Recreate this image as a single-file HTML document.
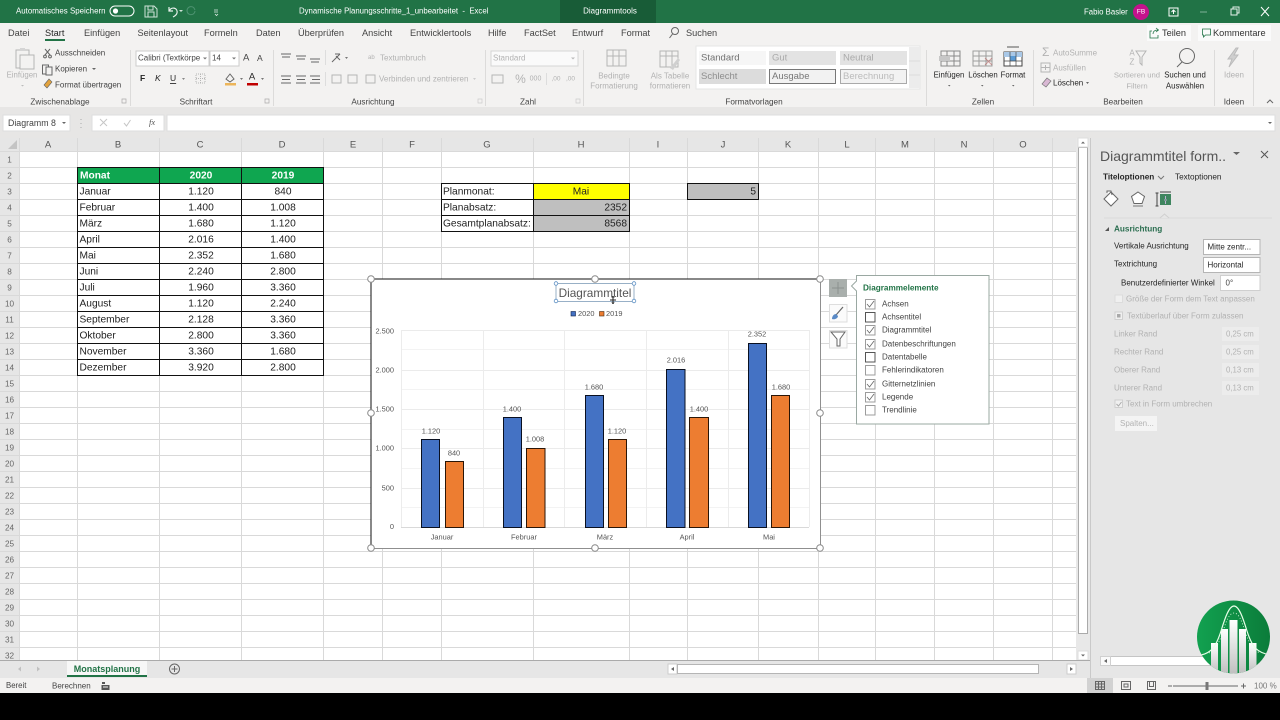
<!DOCTYPE html>
<html lang="de"><head><meta charset="utf-8"><title>Excel</title>
<style>
html,body{margin:0;padding:0;background:#000;width:1280px;height:720px;overflow:hidden}
svg{display:block;position:absolute;left:0;top:0;filter:blur(.25px)}
text{font-family:"Liberation Sans",sans-serif;dominant-baseline:central;white-space:pre;font-size:8.5px;fill:#444}
.m{text-anchor:middle}.e{text-anchor:end}.b{font-weight:bold}
.c{font-size:10.2px;fill:#222}.h{font-size:9.5px;fill:#555;text-anchor:middle}
.a{font-size:7.4px;fill:#555}.r{font-size:8.2px;fill:#666;text-anchor:middle}
.tab{font-size:9.2px;fill:#444}.g{font-size:8.2px;fill:#444;text-anchor:middle}
.p{font-size:8px;fill:#444}.pd{font-size:8px;fill:#b2b2b2}
.i{fill:none;stroke:#666;stroke-width:1}.id{fill:none;stroke:#b5b5b5;stroke-width:1}
.w{fill:#fff}.d{fill:#a8a8a8}.k{fill:#262626}
</style></head><body>
<svg width="1280" height="720" viewBox="0 0 1280 720" xmlns="http://www.w3.org/2000/svg">
<defs>
<clipPath id="cl"><circle cx="1233.500" cy="637" r="36.500"/></clipPath>
<linearGradient id="lg" x1="0" y1="0" x2="1" y2="0"><stop offset="0" stop-color="#12a150"/><stop offset="1" stop-color="#0b7c3a"/></linearGradient>
<linearGradient id="bg" x1="0" y1="0" x2="0" y2="1"><stop offset="0" stop-color="#fff"/><stop offset="1" stop-color="#bdbdbd"/></linearGradient>
</defs>
<rect width="1280" height="720" fill="#000"/>
<!-- title bar -->
<rect width="1280" height="23" fill="#217346"/>
<rect x="560" width="96" height="23" fill="#185c37"/>
<text x="16" y="11" class="w" style="font-size:7.900px">Automatisches Speichern</text>
<rect x="110" y="6" width="24" height="10" rx="5" fill="none" stroke="#fff"/><circle cx="115.500" cy="11" r="2.600" fill="#fff"/>
<path d="M145 6h9l3 3v8h-12zM148 6v4h5V6M148 17v-5h6v5" fill="none" stroke="#cfe3d8"/>
<path d="M169 7v4h4M169 11c3-5 9-3 8 2-.5 2-2 3-4 4" fill="none" stroke="#e8f1ec" stroke-width="1.200"/>
<path d="M179 10l2 2 2-2" fill="#cfe3d8"/>
<path d="M195 11a4 4 0 1 1-1-3l1 2" fill="none" stroke="#4d9270"/>
<path d="M214 10h4M214 12h4M215 14l1.500 1.500 1.500-1.500" stroke="#e0ece5" fill="none" stroke-width=".8"/>
<text x="299" y="11" class="w" style="font-size:7.800px">Dynamische Planungsschritte_1_unbearbeitet  -  Excel</text>
<text x="610" y="11" class="w m" style="font-size:8px">Diagrammtools</text>
<text x="1084" y="12" class="w" style="font-size:7.800px">Fabio Basler</text>
<circle cx="1141" cy="12" r="8" fill="#c4128c"/><text x="1141" y="12" class="w m" style="font-size:6.500px">FB</text>
<path d="M1169 8h9v8h-9zM1173.500 14v-4M1171.500 12l2-2 2 2" fill="none" stroke="#fff"/>
<path d="M1200 12h7" stroke="#7fb098"/>
<path d="M1231 9h6v6h-6zM1233 9V7h6v6h-2" fill="none" stroke="#e8f1ec"/>
<path d="M1261 7l8 9M1269 7l-8 9" stroke="#fff"/>
<!-- ribbon -->
<rect y="23" width="1280" height="85" fill="#f3f2f1"/>
<text x="8" y="33" class="tab">Datei</text><text x="45" y="33" class="tab k">Start</text>
<rect x="45" y="39" width="20" height="2" fill="#217346"/>
<text x="84" y="33" class="tab">Einfügen</text><text x="137.500" y="33" class="tab">Seitenlayout</text>
<text x="204" y="33" class="tab">Formeln</text><text x="256" y="33" class="tab">Daten</text>
<text x="298" y="33" class="tab">Überprüfen</text><text x="362" y="33" class="tab">Ansicht</text>
<text x="410" y="33" class="tab">Entwicklertools</text><text x="488" y="33" class="tab">Hilfe</text>
<text x="524" y="33" class="tab">FactSet</text><text x="572" y="33" class="tab">Entwurf</text>
<text x="621" y="33" class="tab">Format</text><text x="686" y="33" class="tab">Suchen</text>
<circle cx="675" cy="31" r="3.500" class="i"/><path d="M672.500 34l-3 4" class="i"/>
<rect x="1147" y="25" width="44" height="16" fill="#fafafa"/><rect x="1198" y="25" width="73" height="16" fill="#fafafa"/>
<path d="M1152 31h-2v7h8v-3M1153 34c0-3 2-4 5-4M1156 28l2.500 2-2.500 2" fill="none" stroke="#217346" stroke-width=".8"/>
<text x="1162" y="33" class="tab" style="fill:#333">Teilen</text>
<path d="M1202.500 29h8v6h-5l-2 2v-2h-1z" fill="none" stroke="#217346" stroke-width=".8"/>
<text x="1213" y="33" class="tab" style="fill:#333">Kommentare</text>
<!-- separators -->
<path d="M130.500 50v56M273.500 50v56M485.500 50v56M583.500 50v56M926.500 50v56M1033.500 50v56M1214.500 50v56M1253.500 50v56" stroke="#dcdbda"/>
<!-- clipboard -->
<path d="M16 50h13v18H16z" class="id"/><path d="M20 55h14v14H20z" fill="#f3f2f1" stroke="#b5b5b5"/><rect x="20" y="48" width="5" height="3" fill="#d5d5d5"/>
<text x="22" y="75" class="m pd" style="font-size:7.800px">Einfügen</text><path d="M21 85h3l-1.500 1.500z" fill="#bbb"/>
<path d="M45 49l5 6M50 49l-5 6" class="i"/><circle cx="45" cy="56.500" r="1.400" class="i"/><circle cx="50" cy="56.500" r="1.400" class="i"/>
<text x="55" y="53" class="p">Ausschneiden</text>
<path d="M42.500 65h6v9h-6z" class="i"/><path d="M46 67h6v8h-6z" fill="#f3f2f1" stroke="#666"/>
<text x="55" y="69" class="p">Kopieren</text><path d="M92 68h4l-2 2z" fill="#666"/>
<path d="M44 85l5-6 3 3-5 6z" fill="#e2a23d" stroke="#666" stroke-width=".6"/>
<text x="55" y="85" class="p">Format übertragen</text>
<text x="60" y="102" class="g">Zwischenablage</text><path d="M122 99h4v4h-4z" fill="none" stroke="#aaa" stroke-width=".7"/>
<!-- font -->
<rect x="136" y="51" width="73" height="15" fill="#fff" stroke="#ccc"/><rect x="210" y="51" width="29" height="15" fill="#fff" stroke="#ccc"/>
<text x="138" y="58" class="p">Calibri (Textkörpe</text><path d="M203 57.500h4l-2 2z" fill="#777"/>
<text x="212" y="58" class="p">14</text><path d="M232 57.500h4l-2 2z" fill="#777"/>
<text x="243" y="58" class="p" style="font-size:9.500px">A</text><text x="257" y="58" class="p" style="font-size:8.500px">A</text>
<text x="140" y="78" class="b k" style="font-size:8.500px">F</text><text x="155" y="78" class="k" style="font-size:8.500px;font-style:italic">K</text><text x="170" y="78" class="k" style="font-size:8.500px;text-decoration:underline">U</text>
<path d="M182 78h3l-1.500 2z" fill="#888"/><path d="M196 74h9v9h-9zM196 78.500h9M200.500 74v9" class="id" stroke-dasharray="1 1"/>
<path d="M226 79l4-5 4 5-4 3z" class="i"/><rect x="225" y="83" width="11" height="2.500" fill="#ecb55a"/>
<text x="252" y="77" class="m k" style="font-size:9.500px">A</text><rect x="247" y="83" width="11" height="2.500" fill="#c00000"/>
<path d="M240 78h3l-1.500 2zM261 78h3l-1.500 2z" fill="#777"/>
<text x="196" y="102" class="g">Schriftart</text><path d="M265 99h4v4h-4z" fill="none" stroke="#aaa" stroke-width=".7"/>
<!-- align -->
<path d="M281 54h10M282 57h8M296 56h10M297 59h8M310 59h10M311 62h8" class="i"/>
<path d="M281 76h10M282 79.500h8M281 83h10M296 76h10M297 79.500h8M296 83h10M310 76h10M312 79.500h8M310 83h10" class="i"/>
<path d="M325.500 50v15M325.500 72v14" stroke="#ddd"/>
<path d="M332 62l8-8M335 54h5M340 60l-4-4" class="i"/><path d="M345 57h3l-1.500 2z" fill="#777"/>
<path d="M332 75h9v8h-9zM348 75h9v8h-9z" class="id"/>
<text x="380" y="58" class="pd">Textumbruch</text><text x="368" y="58" class="pd" style="font-size:6px">ab</text>
<rect x="366" y="75" width="9" height="8" class="id"/>
<text x="379" y="79" class="pd">Verbinden und zentrieren</text><path d="M473 78h3l-1.500 2z" fill="#ccc"/>
<text x="373" y="102" class="g">Ausrichtung</text><path d="M478 99h4v4h-4z" fill="none" stroke="#ccc" stroke-width=".7"/>
<!-- number -->
<rect x="491" y="51" width="87" height="15" fill="#fafafa" stroke="#d5d5d5"/><text x="493" y="58" class="pd">Standard</text><path d="M571 57.500h4l-2 2z" fill="#bbb"/>
<path d="M492 75h11v8h-11z" class="id"/><text x="520.500" y="79" class="pd m" style="font-size:12px">%</text><text x="535.500" y="79" class="pd m" style="font-size:7px">000</text>
<path d="M546.500 73v12" stroke="#ddd"/><text x="556" y="79" class="pd m" style="font-size:6.500px">,00</text><text x="570.500" y="79" class="pd m" style="font-size:6.500px">,00</text>
<text x="528" y="102" class="g">Zahl</text><path d="M576 99h4v4h-4z" fill="none" stroke="#ccc" stroke-width=".7"/>
<!-- styles -->
<path d="M607 50h19v16h-19zM607 56h19M613 50v16M619 50v16" class="id"/>
<text x="614" y="76" class="pd m">Bedingte</text><text x="614" y="86" class="pd m">Formatierung</text>
<path d="M660 51h18v16h-18zM660 56h18M666 51v16M672 51v16" class="id"/><path d="M670 68l8-10 2 2-7 10z" fill="#d0d0d0"/>
<text x="670" y="76" class="pd m">Als Tabelle</text><text x="670" y="86" class="pd m">formatieren</text>
<rect x="696" y="46" width="224" height="43" fill="#fff" stroke="#e5e5e5"/>
<rect x="699" y="51" width="67" height="14" fill="#f6f6f6"/><text x="701" y="58" style="font-size:9.500px;fill:#707070">Standard</text>
<rect x="769" y="51" width="67" height="14" fill="#e3e3e3"/><text x="772" y="58" style="font-size:9.500px;fill:#aaa">Gut</text>
<rect x="840" y="51" width="67" height="14" fill="#e3e3e3"/><text x="843" y="58" style="font-size:9.500px;fill:#aaa">Neutral</text>
<rect x="699" y="69" width="67" height="15" fill="#dcdcdc"/><text x="701" y="76.500" style="font-size:9.500px;fill:#8e8e8e">Schlecht</text>
<rect x="769.500" y="69.500" width="66" height="14" fill="#f2f2f2" stroke="#777"/><text x="772" y="76.500" style="font-size:9.500px;fill:#777">Ausgabe</text>
<rect x="840.500" y="69.500" width="66" height="14" fill="#f2f2f2" stroke="#aaa"/><text x="843" y="76.500" style="font-size:9.500px;fill:#bbb">Berechnung</text>
<rect x="909" y="47" width="11" height="41" fill="#ececec"/><path d="M909 61h11M909 75h11" stroke="#ddd"/>
<text x="754" y="102" class="g">Formatvorlagen</text>
<!-- cells -->
<path d="M941 51h19v15h-19zM941 56h19M941 61h19M947 51v15M954 51v15" class="i" stroke-opacity=".75"/><rect x="939" y="56" width="11" height="5" fill="#c7c7c7"/>
<text x="949" y="75" class="p m k" style="font-size:7.800px">Einfügen</text><path d="M948 85h2.500l-1.250 1.500z" fill="#666"/>
<path d="M973 51h19v15h-19zM973 56h19M973 61h19M979 51v15M986 51v15" class="i" stroke-opacity=".6"/><path d="M985 58l7 7M992 58l-7 7" stroke="#b04b4b" stroke-opacity=".5"/>
<text x="983" y="75" class="p m k" style="font-size:7.800px">Löschen</text><path d="M981 85h2.500l-1.250 1.500z" fill="#666"/>
<rect x="1004" y="52" width="18" height="14" fill="#fff" stroke="#444"/><rect x="1004" y="52" width="18" height="5" fill="#a9c8e7"/><rect x="1010" y="56" width="6" height="5" fill="#5b9bd5"/><path d="M1004 61h18M1010 52v14M1016 52v14" stroke="#444" stroke-width=".7"/><path d="M1007 47h12" stroke="#555"/>
<text x="1013" y="75" class="p m k" style="font-size:7.800px">Format</text><path d="M1012 85h2.500l-1.250 1.500z" fill="#666"/>
<text x="983" y="102" class="g">Zellen</text>
<!-- edit -->
<text x="1042" y="52" class="pd" style="font-size:12px">Σ</text><text x="1053" y="53" class="pd">AutoSumme</text>
<path d="M1041 63h9v9h-9zM1041 67.500h9M1045.500 65v5" class="id"/>
<text x="1053" y="68" class="pd">Ausfüllen</text>
<path d="M1042 84l5-6 4 3-5 6z" fill="#d9b8d4" stroke="#777" stroke-width=".7"/>
<text x="1053" y="83" class="p k">Löschen</text><path d="M1086 82h3l-1.500 2z" fill="#666"/>
<text x="1132" y="53" class="pd m" style="font-size:8px">A</text><text x="1132" y="62" class="pd m" style="font-size:8px">Z</text><path d="M1136 51h10l-4 6v8l-2-2v-6z" class="id"/>
<text x="1137" y="75" class="pd m" style="font-size:7.700px">Sortieren und</text><text x="1137" y="86" class="pd m" style="font-size:7.700px">Filtern</text>
<circle cx="1187" cy="56" r="7.500" class="i"/><path d="M1182 62l-5 5" class="i"/>
<text x="1185" y="75" class="p m k" style="font-size:7.800px">Suchen und</text><text x="1185" y="86" class="p m k" style="font-size:7.800px">Auswählen</text>
<path d="M1236 48l-8 11h4l-3 8 9-12h-4l4-7z" fill="#cfcfcf" stroke="#bbb"/>
<text x="1234" y="75" class="pd m">Ideen</text>
<text x="1123" y="102" class="g">Bearbeiten</text><text x="1234" y="102" class="g">Ideen</text>
<path d="M1267 103l3-3 3 3" fill="none" stroke="#666"/>
<!-- formula bar -->
<rect y="107" width="1280" height="31" fill="#e7e6e5"/>
<rect x="3" y="115" width="67" height="16" fill="#fff" stroke="#dedede"/><text x="8" y="123" class="p" style="font-size:8.800px">Diagramm 8</text><path d="M62 122h4l-2 2z" fill="#666"/>
<path d="M81 119v1M81 123v1M81 127v1" stroke="#aaa"/>
<rect x="92" y="115" width="72" height="16" fill="#fff" stroke="#dedede"/><path d="M100 119l7 7M107 119l-7 7" stroke="#c6c6c6"/><path d="M124 123l2.500 3 4-6" fill="none" stroke="#c6c6c6"/>
<text x="149" y="122" style="font-size:8.500px;font-style:italic;font-family:'Liberation Serif',serif;fill:#555">fx</text>
<rect x="167" y="115" width="1108" height="16" fill="#fff" stroke="#dedede"/><path d="M1268 122h4l-2 2z" fill="#666"/>
<!-- sheet -->
<rect x="0" y="138" width="1090" height="522" fill="#fff"/>
<rect x="0" y="138" width="1076" height="13" fill="#e6e6e6"/><rect x="0" y="138" width="19" height="522" fill="#e6e6e6"/>
<path d="M8 149l9-9v9z" fill="#c4c4c4"/>
<path d="M19.500 138V660M77.500 138V660M159.500 138V660M241.500 138V660M323.500 138V660M382.500 138V660M441.500 138V660M533.500 138V660M629.500 138V660M687.500 138V660M758.500 138V660M818.500 138V660M875.500 138V660M934.500 138V660M993.500 138V660M1052.500 138V660" stroke="#d9d9d9"/>
<path d="M0 151.500H1076M0 167.500H1076M0 183.500H1076M0 199.500H1076M0 215.500H1076M0 231.500H1076M0 247.500H1076M0 263.500H1076M0 279.500H1076M0 295.500H1076M0 311.500H1076M0 327.500H1076M0 343.500H1076M0 359.500H1076M0 375.500H1076M0 391.500H1076M0 407.500H1076M0 423.500H1076M0 439.500H1076M0 455.500H1076M0 471.500H1076M0 487.500H1076M0 503.500H1076M0 519.500H1076M0 535.500H1076M0 551.500H1076M0 567.500H1076M0 583.500H1076M0 599.500H1076M0 615.500H1076M0 631.500H1076M0 647.500H1076" stroke="#d9d9d9"/>
<text x="48" y="145" class="h">A</text><text x="118" y="145" class="h">B</text><text x="200" y="145" class="h">C</text><text x="282" y="145" class="h">D</text><text x="353" y="145" class="h">E</text><text x="412" y="145" class="h">F</text><text x="487" y="145" class="h">G</text><text x="581" y="145" class="h">H</text><text x="658" y="145" class="h">I</text><text x="723" y="145" class="h">J</text><text x="788" y="145" class="h">K</text><text x="847" y="145" class="h">L</text><text x="905" y="145" class="h">M</text><text x="964" y="145" class="h">N</text><text x="1023" y="145" class="h">O</text>
<g>
<text x="9.500" y="160" class="r">1</text><text x="9.500" y="176" class="r">2</text><text x="9.500" y="192" class="r">3</text><text x="9.500" y="208" class="r">4</text><text x="9.500" y="224" class="r">5</text><text x="9.500" y="240" class="r">6</text><text x="9.500" y="256" class="r">7</text><text x="9.500" y="272" class="r">8</text><text x="9.500" y="288" class="r">9</text><text x="9.500" y="304" class="r">10</text><text x="9.500" y="320" class="r">11</text><text x="9.500" y="336" class="r">12</text><text x="9.500" y="352" class="r">13</text><text x="9.500" y="368" class="r">14</text><text x="9.500" y="384" class="r">15</text><text x="9.500" y="400" class="r">16</text><text x="9.500" y="416" class="r">17</text><text x="9.500" y="432" class="r">18</text><text x="9.500" y="448" class="r">19</text><text x="9.500" y="464" class="r">20</text><text x="9.500" y="480" class="r">21</text><text x="9.500" y="496" class="r">22</text><text x="9.500" y="512" class="r">23</text><text x="9.500" y="528" class="r">24</text><text x="9.500" y="544" class="r">25</text><text x="9.500" y="560" class="r">26</text><text x="9.500" y="576" class="r">27</text><text x="9.500" y="592" class="r">28</text><text x="9.500" y="608" class="r">29</text><text x="9.500" y="624" class="r">30</text><text x="9.500" y="640" class="r">31</text><text x="9.500" y="656" class="r">32</text>
</g>
<!-- table -->
<rect x="78" y="168" width="245" height="16" fill="#0fa650"/>
<path d="M77.500 167.500H323.500V375.500H77.500ZM77.500 183.500H323.500M77.500 199.500H323.500M77.500 215.500H323.500M77.500 231.500H323.500M77.500 247.500H323.500M77.500 263.500H323.500M77.500 279.500H323.500M77.500 295.500H323.500M77.500 311.500H323.500M77.500 327.500H323.500M77.500 343.500H323.500M77.500 359.500H323.500M159.500 167.500V375.500M241.500 167.500V375.500" fill="none" stroke="#111"/>
<text x="80" y="176" class="c b w">Monat</text><text x="201" y="176" class="c b w m">2020</text><text x="283" y="176" class="c b w m">2019</text>
<text x="79.500" y="192" class="c">Januar</text><text x="201" y="192" class="c m">1.120</text><text x="283" y="192" class="c m">840</text>
<text x="79.500" y="208" class="c">Februar</text><text x="201" y="208" class="c m">1.400</text><text x="283" y="208" class="c m">1.008</text>
<text x="79.500" y="224" class="c">März</text><text x="201" y="224" class="c m">1.680</text><text x="283" y="224" class="c m">1.120</text>
<text x="79.500" y="240" class="c">April</text><text x="201" y="240" class="c m">2.016</text><text x="283" y="240" class="c m">1.400</text>
<text x="79.500" y="256" class="c">Mai</text><text x="201" y="256" class="c m">2.352</text><text x="283" y="256" class="c m">1.680</text>
<text x="79.500" y="272" class="c">Juni</text><text x="201" y="272" class="c m">2.240</text><text x="283" y="272" class="c m">2.800</text>
<text x="79.500" y="288" class="c">Juli</text><text x="201" y="288" class="c m">1.960</text><text x="283" y="288" class="c m">3.360</text>
<text x="79.500" y="304" class="c">August</text><text x="201" y="304" class="c m">1.120</text><text x="283" y="304" class="c m">2.240</text>
<text x="79.500" y="320" class="c">September</text><text x="201" y="320" class="c m">2.128</text><text x="283" y="320" class="c m">3.360</text>
<text x="79.500" y="336" class="c">Oktober</text><text x="201" y="336" class="c m">2.800</text><text x="283" y="336" class="c m">3.360</text>
<text x="79.500" y="352" class="c">November</text><text x="201" y="352" class="c m">3.360</text><text x="283" y="352" class="c m">1.680</text>
<text x="79.500" y="368" class="c">Dezember</text><text x="201" y="368" class="c m">3.920</text><text x="283" y="368" class="c m">2.800</text>
<!-- plan -->
<rect x="533" y="183" width="96" height="16" fill="#ffff00"/><rect x="533" y="199" width="96" height="32" fill="#bfbfbf"/><rect x="687" y="183" width="71" height="16" fill="#bfbfbf"/>
<path d="M441.500 183.500H629.500V231.500H441.500ZM441.500 199.500H629.500M441.500 215.500H629.500M533.500 183.500V231.500M687.500 183.500H758.500V199.500H687.500Z" fill="none" stroke="#111"/>
<text x="443" y="192" class="c">Planmonat:</text><text x="443" y="208" class="c">Planabsatz:</text><text x="443" y="224" class="c">Gesamtplanabsatz:</text>
<text x="581" y="192" class="c m">Mai</text><text x="627" y="208" class="c e">2352</text><text x="627" y="224" class="c e">8568</text><text x="756" y="192" class="c e">5</text>
<!-- chart -->
<rect x="371" y="279" width="449" height="269" fill="#fff"/>
<path d="M401 349.500H809M401 389.500H809M401 429.500H809M401 468.500H809M401 507.500H809" stroke="#f3f3f3"/>
<path d="M401 330.500H809M401 370.500H809M401 409.500H809M401 448.500H809M401 488.500H809" stroke="#ebebeb"/>
<path d="M401.500 330V527M483.500 330V527M564.500 330V527M646.500 330V527M728.500 330V527M809.500 330V527" stroke="#ececec"/>
<path d="M401 527.500H809" stroke="#d9d9d9"/>
<g stroke="#0a1020" stroke-width="1">
<rect x="421.500" y="439.500" width="18" height="88" fill="#4472c4"/><rect x="503.500" y="417.500" width="18" height="110" fill="#4472c4"/><rect x="585.500" y="395.500" width="18" height="132" fill="#4472c4"/><rect x="666.500" y="369.500" width="18.500" height="158" fill="#4472c4"/><rect x="748.500" y="343.500" width="18" height="184" fill="#4472c4"/>
</g>
<g stroke="#2b1607" stroke-width="1">
<rect x="445.500" y="461.500" width="18" height="66" fill="#ed7d31"/><rect x="526.500" y="448.500" width="18.500" height="79" fill="#ed7d31"/><rect x="608.500" y="439.500" width="18" height="88" fill="#ed7d31"/><rect x="689.500" y="417.500" width="19" height="110" fill="#ed7d31"/><rect x="771.500" y="395.500" width="18" height="132" fill="#ed7d31"/>
</g>
<g>
<text x="431" y="431" class="a m">1.120</text><text x="454" y="453" class="a m">840</text><text x="512" y="409" class="a m">1.400</text><text x="535" y="439" class="a m">1.008</text><text x="594" y="387" class="a m">1.680</text><text x="617" y="431" class="a m">1.120</text><text x="676" y="360" class="a m">2.016</text><text x="699" y="409" class="a m">1.400</text><text x="757" y="334" class="a m">2.352</text><text x="781" y="387" class="a m">1.680</text>
<text x="394" y="331" class="a e">2.500</text><text x="394" y="370" class="a e">2.000</text><text x="394" y="409" class="a e">1.500</text><text x="394" y="448" class="a e">1.000</text><text x="394" y="488" class="a e">500</text><text x="394" y="526.500" class="a e">0</text>
<text x="442" y="537" class="a m">Januar</text><text x="524" y="537" class="a m">Februar</text><text x="605" y="537" class="a m">März</text><text x="687" y="537" class="a m">April</text><text x="769" y="537" class="a m">Mai</text>
</g>
<rect x="571" y="311.500" width="4.500" height="4.500" fill="#4472c4" stroke="#10204a" stroke-width=".6"/><text x="578" y="313.500" class="a">2020</text>
<rect x="599.500" y="311.500" width="4.500" height="4.500" fill="#ed7d31" stroke="#4a2a10" stroke-width=".6"/><text x="606" y="313.500" class="a">2019</text>
<path d="M371 279H820" stroke="#111" stroke-width="1"/><path d="M371 279V548" stroke="#111" stroke-width="1"/>
<path d="M820.500 279V548M371 548.500H820" stroke="#8f8f8f"/>
<g fill="#fff" stroke="#8a8a8a" stroke-width="1">
<circle cx="371" cy="279" r="3.300"/><circle cx="595" cy="279" r="3.300"/><circle cx="820" cy="279" r="3.300"/><circle cx="371" cy="413" r="3.300"/><circle cx="820" cy="413" r="3.300"/><circle cx="371" cy="548" r="3.300"/><circle cx="595" cy="548" r="3.300"/><circle cx="820" cy="548" r="3.300"/>
</g>
<rect x="556" y="283.500" width="78" height="18" fill="none" stroke="#7f9db9" stroke-width=".8"/>
<g fill="#fff" stroke="#5b8fc4" stroke-width=".8"><circle cx="556" cy="283.500" r="1.800"/><circle cx="634" cy="283.500" r="1.800"/><circle cx="556" cy="301" r="1.800"/><circle cx="634" cy="301" r="1.800"/></g>
<text x="595" y="293" class="m" style="font-size:11.800px;fill:#555">Diagrammtitel</text>
<path d="M613 297v6M610 300h6" stroke="#222" stroke-width="1"/><path d="M611.500 297.500l1.500-1.500 1.500 1.500M611.500 302.500l1.500 1.500 1.500-1.500" fill="#222" stroke="#222" stroke-width=".5"/>
<!-- chart buttons -->
<rect x="829" y="279" width="18" height="18" fill="#a9afac"/><path d="M838 282v12M832 288h12" stroke="#8a918e"/>
<rect x="829.500" y="304.500" width="17.500" height="17.500" fill="#fbfbfb" stroke="#dedede"/><path d="M843 307l-7 8" stroke="#666" stroke-width="1.200"/><path d="M832 319c0-3 2-5 4-5l2 2c0 2-3 4-6 3z" fill="#5a8ac6"/>
<rect x="829.500" y="330.500" width="17.500" height="17.500" fill="#fbfbfb" stroke="#dedede"/><path d="M831 332h14l-5 7v7h-3v-7z" fill="#fff" stroke="#666"/>
<!-- popup -->
<rect x="856.500" y="275.500" width="132.500" height="148.500" fill="#fff" stroke="#9aa8a2"/>
<path d="M856.500 281l-5 5 5 5" fill="#fff" stroke="#9aa8a2"/><path d="M857 281.500v9" stroke="#fff"/>
<text x="863" y="288" class="b" style="font-size:8.200px;fill:#217346">Diagrammelemente</text>
<g fill="none" stroke="#9c9c9c"><rect x="865.500" y="299.500" width="9.500" height="9.500"/><rect x="865.500" y="312.500" width="9.500" height="9.500" stroke="#555"/><rect x="865.500" y="325.500" width="9.500" height="9.500"/><rect x="865.500" y="339.500" width="9.500" height="9.500"/><rect x="865.500" y="352.500" width="9.500" height="9.500" stroke="#555"/><rect x="865.500" y="365.500" width="9.500" height="9.500"/><rect x="865.500" y="379.500" width="9.500" height="9.500"/><rect x="865.500" y="392.500" width="9.500" height="9.500"/><rect x="865.500" y="405.500" width="9.500" height="9.500"/></g>
<path d="M867 304l2.500 3 4.500-6M867 330l2.500 3 4.500-6M867 344l2.500 3 4.500-6M867 384l2.500 3 4.500-6M867 397l2.500 3 4.500-6" fill="none" stroke="#666" stroke-width=".8"/>
<g><text x="882" y="304" class="p">Achsen</text><text x="882" y="317" class="p">Achsentitel</text><text x="882" y="330" class="p">Diagrammtitel</text><text x="882" y="344" class="p">Datenbeschriftungen</text><text x="882" y="357" class="p">Datentabelle</text><text x="882" y="370" class="p">Fehlerindikatoren</text><text x="882" y="384" class="p">Gitternetzlinien</text><text x="882" y="397" class="p">Legende</text><text x="882" y="410" class="p">Trendlinie</text></g>
<!-- sheet scrollbar -->
<rect x="1076" y="138" width="14" height="522" fill="#e8e8e8"/>
<rect x="1078.500" y="147.500" width="9" height="486" fill="#fff" stroke="#aaa"/>
<rect x="1078" y="138" width="10" height="9" fill="#fff" stroke="#ddd"/><path d="M1081 143.500l2-2 2 2z" fill="#666"/>
<rect x="1078" y="651" width="10" height="9" fill="#fff" stroke="#ddd"/><path d="M1081 654.500l2 2 2-2z" fill="#666"/>
<!-- panel -->
<rect x="1090" y="138" width="190" height="540" fill="#e6e6e6"/><path d="M1090.500 138V678" stroke="#c9c9c9"/>
<text x="1100" y="156" style="font-size:14px;fill:#555">Diagrammtitel form..</text><path d="M1233 152h7l-3.500 3z" fill="#666"/>
<path d="M1261 151l7 7M1268 151l-7 7" stroke="#555"/>
<text x="1103" y="177" class="b k" style="font-size:8.200px">Titeloptionen</text><path d="M1158 176l3 3 3-3" fill="none" stroke="#777"/><text x="1175" y="177" class="k" style="font-size:8.200px">Textoptionen</text>
<path d="M1104 199l7-7 7 7-7 7zM1107 193v-2h4l1 4" fill="#fff" stroke="#666"/>
<path d="M1138 192l6.500 4.500-2.500 7h-8l-2.500-7z" fill="#fff" stroke="#666"/><path d="M1133 206h10" stroke="#777"/>
<rect x="1160" y="194" width="11" height="11" fill="#217346" opacity=".85"/><path d="M1157 193v13M1155.500 193h3M1155.500 206h3M1160 192h11" stroke="#444" fill="none"/><path d="M1165.500 196v3M1165.500 201v3M1164 200h3" stroke="#dbe" stroke-width=".8"/>
<path d="M1104 218H1272" stroke="#d9d9d9"/><path d="M1160 218l4.500-4 4.500 4" fill="#e6e6e6" stroke="#d0d0d0"/>
<path d="M1105 231h4v-4z" fill="#555"/><text x="1114" y="229" class="b" style="font-size:8.200px;fill:#2b6e50">Ausrichtung</text>
<g>
<text x="1114" y="246" class="p k">Vertikale Ausrichtung</text><rect x="1203.500" y="239.500" width="56.500" height="15" fill="#fff" stroke="#b5b5b5"/><text x="1207.500" y="247" class="p k">Mitte zentr...</text>
<text x="1114" y="264" class="p k">Textrichtung</text><rect x="1203.500" y="257.500" width="56.500" height="15" fill="#fff" stroke="#b5b5b5"/><text x="1207.500" y="265" class="p k">Horizontal</text>
<text x="1121" y="283" class="p k">Benutzerdefinierter Winkel</text><rect x="1220.500" y="275.500" width="39.500" height="15" fill="#fff" stroke="#cfcfcf"/><text x="1225.500" y="283" class="p">0°</text>
<rect x="1115" y="295" width="7.500" height="7.500" fill="#f0f0f0" stroke="#dcdcdc"/><text x="1126" y="299" class="pd">Größe der Form dem Text anpassen</text>
<rect x="1115" y="312" width="7.500" height="7.500" fill="#f0f0f0" stroke="#cfcfcf"/><rect x="1117" y="314" width="3.500" height="3.500" fill="#a9a9a9"/><text x="1127" y="316" class="pd">Textüberlauf über Form zulassen</text>
<text x="1114" y="334" class="pd">Linker Rand</text><rect x="1222" y="327" width="37" height="14" fill="#ececec"/><text x="1226" y="334" class="pd" style="font-size:7.800px">0,25 cm</text>
<text x="1114" y="352" class="pd">Rechter Rand</text><rect x="1222" y="345" width="37" height="14" fill="#ececec"/><text x="1226" y="352" class="pd" style="font-size:7.800px">0,25 cm</text>
<text x="1114" y="370" class="pd">Oberer Rand</text><rect x="1222" y="363" width="37" height="14" fill="#ececec"/><text x="1226" y="370" class="pd" style="font-size:7.800px">0,13 cm</text>
<text x="1114" y="388" class="pd">Unterer Rand</text><rect x="1222" y="381" width="37" height="14" fill="#ececec"/><text x="1226" y="388" class="pd" style="font-size:7.800px">0,13 cm</text>
<rect x="1115" y="400" width="7.500" height="7.500" fill="#f0f0f0" stroke="#cfcfcf"/><path d="M1116.500 404l2 2 3-4" fill="none" stroke="#aaa"/><text x="1126" y="404" class="pd">Text in Form umbrechen</text>
<rect x="1115" y="416" width="42" height="15" fill="#f4f4f4"/><text x="1120" y="423.500" class="pd">Spalten...</text>
</g>
<rect x="1100.500" y="656.500" width="130" height="9" fill="#fff" stroke="#c5c5c5"/><rect x="1100.500" y="656.500" width="10" height="9" fill="#fafafa" stroke="#d0d0d0"/><path d="M1107 659l-3 2 3 2z" fill="#666"/>
<!-- logo -->
<circle cx="1233.500" cy="637" r="36.500" fill="url(#lg)"/>
<g clip-path="url(#cl)">
<rect x="1211" y="643" width="7" height="32" fill="url(#bg)"/><rect x="1221" y="629" width="7" height="46" fill="url(#bg)"/><rect x="1229.500" y="620" width="8" height="56" fill="url(#bg)"/><rect x="1239" y="629" width="7" height="46" fill="url(#bg)"/><rect x="1249" y="643" width="7.500" height="32" fill="url(#bg)"/>
<path d="M1201 655c10-2 15-8 20-24 4-13 8-25 13-25s9 12 13 25c5 16 10 22 24 24" fill="none" stroke="#e8ffe8" stroke-width="1.200"/>
<path d="M1209 653c7-3 10-10 14-22 3-9 6-18 11-18s8 9 11 18c4 12 8 19 15 22" fill="none" stroke="#e8ffe8" stroke-width=".8" stroke-dasharray="1 2"/>
</g>
<!-- tabs bar -->
<rect y="660" width="1090" height="18" fill="#e6e6e6"/><path d="M0 660.500H1090" stroke="#aaa"/>
<path d="M18 669l3-2.500v5zM40 669l-3-2.500v5z" fill="#c0c0c0"/>
<rect x="67" y="661" width="80" height="15" fill="#f7f7f7"/><rect x="67" y="675" width="80" height="2" fill="#217346"/>
<text x="107" y="669" class="m b" style="font-size:9px;fill:#217346">Monatsplanung</text>
<circle cx="174.500" cy="669" r="5" fill="none" stroke="#666"/><path d="M171.500 669h6M174.500 666v6" stroke="#666"/>
<rect x="668" y="664" width="9" height="10" fill="#fff" stroke="#ccc"/><path d="M674 667l-3 2 3 2z" fill="#666"/>
<rect x="677.500" y="664.500" width="361" height="9" fill="#fff" stroke="#b5b5b5"/>
<rect x="1067" y="664" width="9" height="10" fill="#fff" stroke="#ccc"/><path d="M1070 667l3 2-3 2z" fill="#666"/>
<!-- status -->
<rect y="678" width="1280" height="15" fill="#f3f2f1"/>
<text x="6" y="685.500" class="p" style="font-size:7.800px">Bereit</text><text x="52" y="686" class="p">Berechnen</text>
<path d="M102 682h3v2h-3zM101.500 685h8v5h-8z" fill="#555"/><path d="M103 687h5" stroke="#eee"/>
<rect x="1087" y="678" width="26" height="15" fill="#d2d2d2"/>
<path d="M1095.500 681.500h9v8h-9zM1095.500 684h9M1095.500 687h9M1098.500 681.500v8M1101.500 681.500v8" fill="none" stroke="#666"/>
<path d="M1121.500 681.500h9v8h-9zM1124 684h4v3h-4z" fill="none" stroke="#666"/><path d="M1147.500 681.500h8v8h-8zM1149.500 681.500v5h4v-5" fill="none" stroke="#666"/>
<path d="M1168 686h4M1173 686h65M1241 686h5M1243.500 683.500v5" stroke="#666"/>
<rect x="1205.500" y="682" width="3" height="8" fill="#777"/>
<text x="1254" y="686" class="pd" style="fill:#777">100 %</text>
</svg>
</body></html>
